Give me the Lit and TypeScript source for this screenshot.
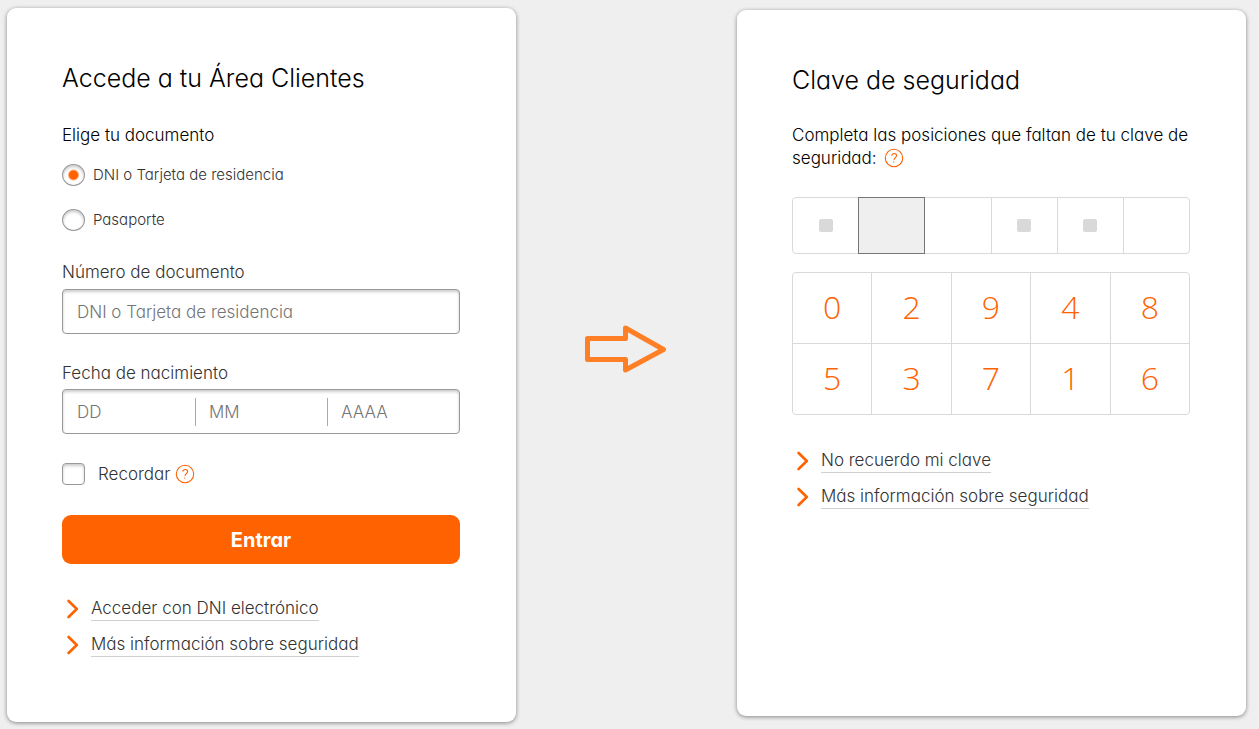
import { LitElement, html, svg, css } from "lit";
import { customElement, state } from "lit/decorators.js";
import { classMap } from "lit/directives/class-map.js";

const helpIcon = html`<svg class="help-icon" viewBox="0 0 20 20" aria-hidden="true">
  <circle cx="10" cy="10" r="8.7" />
  <path d="M7.7 7.7c.2-1.4 1.2-2.2 2.5-2.2 1.4 0 2.400.9 2.400 2.100 0 1.700-2.400 2.200-2.700 4.200" />
  <path d="M9.7 13.5v1.1" />
</svg>`;

const chevron = svg`<svg class="chevron" viewBox="0 0 12 20" aria-hidden="true">
  <path d="M1.600 2 9.800 10 1.600 18" />
</svg>`;

@customElement("app-root")
export class AppRoot extends LitElement {
  @state() private documentType = "dni";

  private readonly documents = [
    { id: "dni", label: "DNI o Tarjeta de residencia" },
    { id: "passport", label: "Pasaporte" },
  ];

  private readonly birthParts = [
    { label: "Día", placeholder: "DD", max: 2 },
    { label: "Mes", placeholder: "MM", max: 2 },
    { label: "Año", placeholder: "AAAA", max: 4 },
  ];

  private readonly positions = ["fixed", "current", "empty", "fixed", "fixed", "empty"];

  private readonly digits = [0, 2, 9, 4, 8, 5, 3, 7, 1, 6];

  static styles = css`
    :host {
      display: block;
      color: #333;
      background: #efefef;
      font-family: Inter, "Open Sans", sans-serif;
      font-feature-settings: "cv11";
      font-size: 17px;
      font-weight: 300;
      line-height: 24px;
    }
    * {
      box-sizing: border-box;
    }
    button,
    input {
      margin: 0;
      font: inherit;
      font-feature-settings: inherit;
      color: inherit;
    }
    .page {
      display: grid;
      grid-template-columns: minmax(0, 509fr) minmax(0, 221fr) minmax(0, 509fr);
      min-height: 100vh;
      padding: 8px 13px 7px 7px;
    }
    .card {
      padding: 52px 56px 55px 55px;
      background: #fff;
      border-radius: 9px;
      box-shadow: 0 1px 4px rgba(0, 0, 0, 0.45);
    }
    .key-card {
      margin: 2px 0 6px;
    }
    h1 {
      margin: 0;
      color: #000;
      font-size: 25px;
      font-weight: 300;
      line-height: 36px;
    }
    fieldset {
      min-width: 0;
      margin: 0;
      padding: 0;
      border: 0;
    }
    legend {
      display: block;
      padding: 0;
    }
    .documents {
      margin-top: 27px;
    }
    .documents legend {
      color: #000;
      margin-bottom: 16px;
    }
    .option {
      display: flex;
      align-items: center;
      gap: 8px;
      font-size: 15px;
    }
    .option + .option {
      margin-top: 21px;
    }
    .radio,
    .check {
      flex: none;
      width: 23px;
      height: 22px;
      appearance: none;
      background: #fff;
      border: 1px solid #999;
      box-shadow: inset 0 2px 3px rgba(0, 0, 0, 0.2);
    }
    .radio {
      border-radius: 50%;
    }
    .radio:checked {
      background: radial-gradient(circle, #ff6200 4px, transparent 6px) #fff;
    }
    .field {
      display: block;
      margin-top: 27px;
    }
    .documents + .field {
      margin-top: 28px;
    }
    .field label,
    .field legend {
      display: block;
      margin-bottom: 5px;
    }
    .field legend {
      margin-bottom: 4px;
    }
    .box {
      display: flex;
      align-items: center;
      width: 100%;
      height: 45px;
      border: 1px solid #999;
      border-radius: 4px;
      box-shadow: inset 0 2px 3px rgba(0, 0, 0, 0.2);
    }
    .text {
      flex: 1;
      min-width: 0;
      height: 28px;
      padding: 0 14px;
      background: transparent;
      border: 0;
    }
    .text + .text {
      border-left: 1px solid #aaa;
      padding-left: 13px;
    }
    .text::placeholder {
      color: #757575;
      opacity: 1;
    }
    .remember {
      display: flex;
      align-items: center;
      margin-top: 28px;
    }
    .remember label {
      display: flex;
      align-items: center;
      gap: 13px;
    }
    .check {
      border-radius: 4px;
    }
    .help {
      display: inline-flex;
      padding: 0;
      margin-left: 5px;
      vertical-align: -4px;
      background: none;
      border: 0;
    }
    .help-icon {
      width: 20px;
      height: 20px;
      fill: none;
      stroke: #ff6200;
      stroke-width: 1.1;
    }
    .submit {
      display: block;
      width: 100%;
      height: 49px;
      margin-top: 29px;
      color: #fff;
      background: #ff6200;
      border: 0;
      border-radius: 9px;
      font-size: 20px;
      font-weight: 700;
    }
    .links {
      display: grid;
      gap: 11px;
      margin: 32px 0 0;
      padding: 0 0 0 5px;
      list-style: none;
    }
    .links li {
      display: flex;
      align-items: center;
      gap: 12px;
    }
    .links a {
      color: inherit;
      text-decoration: none;
      border-bottom: 1px solid #d0d0d0;
    }
    .key-card .links {
      margin-top: 33px;
    }
    .chevron {
      width: 12px;
      height: 20px;
      fill: none;
      stroke: #ff6200;
      stroke-width: 2.6;
      stroke-linecap: round;
      stroke-linejoin: round;
    }
    .between {
      display: grid;
      place-items: center;
      padding: 0 2px 32px 0;
    }
    .arrow {
      width: 82px;
      height: 48px;
      fill: none;
      stroke: #ff7f27;
      stroke-width: 5;
      stroke-linejoin: round;
    }
    .intro {
      margin: 26px 0 0;
      color: #000;
      line-height: 23px;
    }
    .intro .help {
      margin-left: 3px;
    }
    .positions {
      display: flex;
      height: 57px;
      margin-top: 27px;
      border: 1px solid #d9d9d9;
      border-radius: 4px;
    }
    .position {
      display: grid;
      flex: 1;
      min-width: 0;
      place-items: center;
      padding: 0;
      text-align: center;
      background: none;
      border: 0;
      border-radius: 0;
    }
    .position + .position {
      border-left: 1px solid #d9d9d9;
    }
    .positions .current {
      margin: -1px 0;
      background: #efefef;
      border: 1px solid #767676;
    }
    .positions .current + .position {
      border-left: 0;
    }
    .mark {
      width: 14px;
      height: 13px;
      background: #d9d9d9;
      border-radius: 2px;
    }
    .keypad {
      display: grid;
      grid-template-columns: repeat(5, 1fr);
      grid-auto-rows: 70px;
      gap: 1px;
      margin-top: 18px;
      overflow: hidden;
      background: #d9d9d9;
      border: 1px solid #d9d9d9;
      border-radius: 4px;
    }
    .key {
      padding: 0 0 2px;
      color: #ff6200;
      background: #fff;
      border: 0;
      font-family: "Open Sans", sans-serif;
      font-size: 32px;
      font-weight: 350;
    }
  `;

  private renderHelp(label: string) {
    return html`<button class="help" type="button" aria-label=${label}>${helpIcon}</button>`;
  }

  private renderLinks(labels: string[]) {
    return html`<ul class="links">
      ${labels.map((label) => html`<li>${chevron}<a href="#">${label}</a></li>`)}
    </ul>`;
  }

  private renderLogin() {
    return html`<form class="card" @submit=${(e: Event) => e.preventDefault()}>
      <h1>Accede a tu Área Clientes</h1>
      <fieldset class="documents">
        <legend>Elige tu documento</legend>
        ${this.documents.map(
          (doc) => html`<label class="option">
            <input
              class="radio"
              type="radio"
              name="document"
              .checked=${this.documentType === doc.id}
              @change=${() => (this.documentType = doc.id)}
            />
            ${doc.label}
          </label>`
        )}
      </fieldset>
      <div class="field">
        <label for="number">Número de documento</label>
        <div class="box">
          <input class="text" id="number" type="text" placeholder="DNI o Tarjeta de residencia" />
        </div>
      </div>
      <fieldset class="field">
        <legend>Fecha de nacimiento</legend>
        <div class="box">
          ${this.birthParts.map(
            (part) => html`<input
              class="text"
              type="text"
              inputmode="numeric"
              maxlength=${part.max}
              aria-label=${part.label}
              placeholder=${part.placeholder}
            />`
          )}
        </div>
      </fieldset>
      <div class="remember">
        <label><input class="check" type="checkbox" />Recordar</label>
        ${this.renderHelp("Ayuda")}
      </div>
      <button class="submit" type="submit">Entrar</button>
      ${this.renderLinks(["Acceder con DNI electrónico", "Más información sobre seguridad"])}
    </form>`;
  }

  private renderKey() {
    return html`<section class="card key-card">
      <h1>Clave de seguridad</h1>
      <p class="intro">
        Completa las posiciones que faltan de tu clave de seguridad:
        ${this.renderHelp("Ayuda")}
      </p>
      <div class="positions">
        ${this.positions.map((kind, i) =>
          kind === "fixed"
            ? html`<span class="position"><span class="mark"></span></span>`
            : html`<input
                class=${classMap({ position: true, current: kind === "current" })}
                type="password"
                maxlength="1"
                aria-label="Posición ${i + 1}"
              />`
        )}
      </div>
      <div class="keypad">
        ${this.digits.map((digit) => html`<button class="key" type="button">${digit}</button>`)}
      </div>
      ${this.renderLinks(["No recuerdo mi clave", "Más información sobre seguridad"])}
    </section>`;
  }

  render() {
    return html`<main class="page">
      ${this.renderLogin()}
      <div class="between">
        <svg class="arrow" viewBox="0 0 82 48" aria-hidden="true">
          <path d="M2.5 13.5H40.5V3L78.5 24.5 40.5 45V34.5H2.5Z" />
        </svg>
      </div>
      ${this.renderKey()}
    </main>`;
  }
}
